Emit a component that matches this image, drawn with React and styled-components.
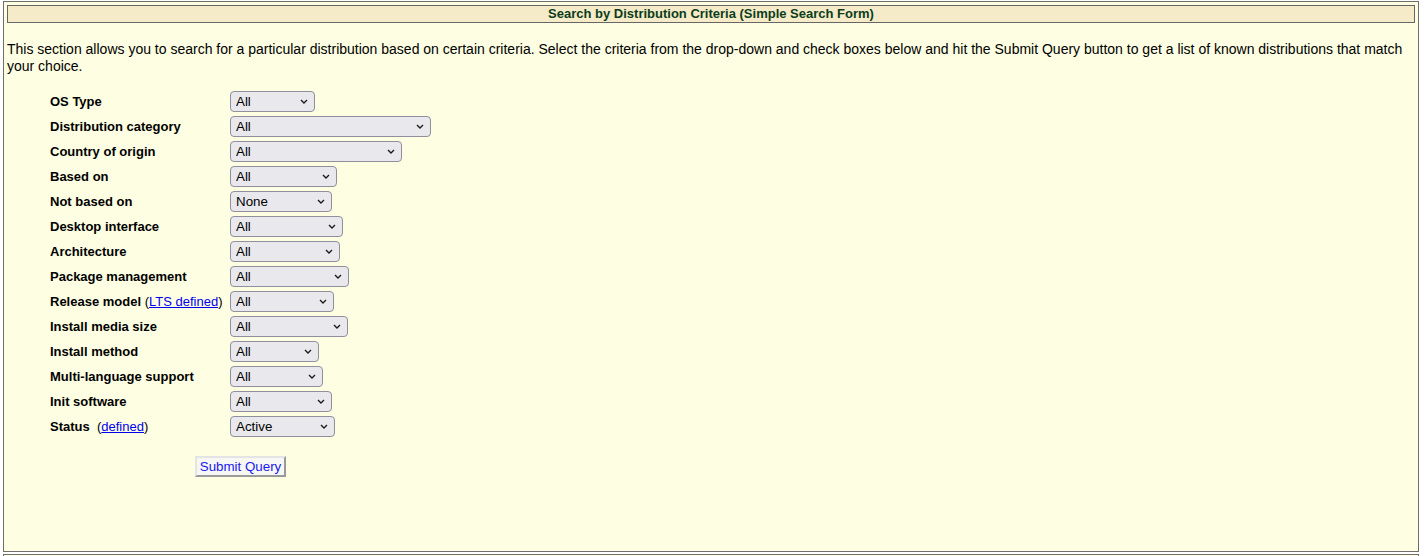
import React from 'react';
import styled, { createGlobalStyle } from 'styled-components';

const GlobalStyle = createGlobalStyle`
  html, body {
    margin: 0;
    padding: 0;
    background: #ffffff;
  }
  body {
    font-family: "Liberation Sans", Arial, sans-serif;
    font-size: 13px;
    color: #000;
  }
`;

const Page = styled.div`
  padding: 1px 6px 0 3px;
`;

const Panel = styled.div`
  box-sizing: border-box;
  height: 551px;
  border: 1px solid #6e6e6e;
  background: #fdfee2;
  padding: 3px;
`;

const NextPanel = styled.div`
  margin-top: 2px;
  height: 20px;
  border: 1px solid #6e6e6e;
  border-bottom: none;
  background: #fdfee2;
`;

const Header = styled.div`
  box-sizing: border-box;
  height: 18px;
  border: 1px solid #666;
  background: #f6ebc8;
  color: #0b3d1c;
  font-weight: bold;
  font-size: 13px;
  line-height: 16px;
  text-align: center;
`;

const Intro = styled.p`
  margin: 18px 0 0;
  font-size: 14px;
  line-height: 17px;
`;

const FormGrid = styled.div`
  display: grid;
  grid-template-columns: 180px auto;
  justify-content: start;
  align-items: center;
  row-gap: 4px;
  margin: 16px 0 0 43px;
`;

const Label = styled.label`
  font-weight: bold;
  white-space: nowrap;
`;

const Extra = styled.span`
  font-weight: normal;
`;

const Link = styled.a`
  color: #0000ee;
  text-decoration: underline;
`;

const SelectWrap = styled.div`
  position: relative;
  width: ${(p) => p.$w}px;
  height: 21px;
`;

const Select = styled.select`
  appearance: none;
  box-sizing: border-box;
  width: 100%;
  height: 100%;
  margin: 0;
  padding: 0 20px 0 5px;
  border: 1px solid #8f8f9d;
  border-radius: 4px;
  background: #e9e9ed;
  color: #000;
  font-family: "Liberation Sans", Arial, sans-serif;
  font-size: 13.33px;
`;

const Chevron = styled.svg`
  position: absolute;
  right: 7px;
  top: 8px;
  pointer-events: none;
`;

const Submit = styled.button`
  box-sizing: border-box;
  margin: 19px 0 0 188px;
  width: 91px;
  height: 21px;
  padding: 0;
  border: 2px solid;
  border-color: #e4e4e4 #9a9a9a #9a9a9a #e4e4e4;
  background: #f7f7f4;
  color: #1a1aee;
  font-family: "Liberation Sans", Arial, sans-serif;
  font-size: 13.33px;
`;

const fields = [
  { label: 'OS Type', width: 85, value: 'All' },
  { label: 'Distribution category', width: 201, value: 'All' },
  { label: 'Country of origin', width: 172, value: 'All' },
  { label: 'Based on', width: 107, value: 'All' },
  { label: 'Not based on', width: 102, value: 'None' },
  { label: 'Desktop interface', width: 113, value: 'All' },
  { label: 'Architecture', width: 110, value: 'All' },
  { label: 'Package management', width: 119, value: 'All' },
  { label: 'Release model', width: 104, value: 'All', link: 'LTS defined' },
  { label: 'Install media size', width: 118, value: 'All' },
  { label: 'Install method', width: 89, value: 'All' },
  { label: 'Multi-language support', width: 93, value: 'All' },
  { label: 'Init software', width: 102, value: 'All' },
  { label: 'Status', width: 105, value: 'Active', link: 'defined', gap: true },
];

const Dropdown = ({ width, value }) => (
  <SelectWrap $w={width}>
    <Select defaultValue={value}>
      <option>{value}</option>
    </Select>
    <Chevron width="8" height="5" viewBox="0 0 8 5">
      <path d="M1 1 L4 4 L7 1" fill="none" stroke="#1c1c1c" strokeWidth="1.4" />
    </Chevron>
  </SelectWrap>
);

export default function App() {
  return (
    <>
      <GlobalStyle />
      <Page>
        <Panel>
          <Header>Search by Distribution Criteria (Simple Search Form)</Header>
          <Intro>
            This section allows you to search for a particular distribution based on certain criteria.
            Select the criteria from the drop-down and check boxes below and hit the Submit Query button
            to get a list of known distributions that match your choice.
          </Intro>
          <FormGrid>
            {fields.map((f) => (
              <React.Fragment key={f.label}>
                <Label>
                  {f.label}
                  {f.link && (
                    <Extra>
                      {f.gap ? '\u00a0 (' : ' ('}
                      <Link href="#">{f.link}</Link>)
                    </Extra>
                  )}
                </Label>
                <Dropdown width={f.width} value={f.value} />
              </React.Fragment>
            ))}
          </FormGrid>
          <Submit type="button">Submit Query</Submit>
        </Panel>
        <NextPanel />
      </Page>
    </>
  );
}
